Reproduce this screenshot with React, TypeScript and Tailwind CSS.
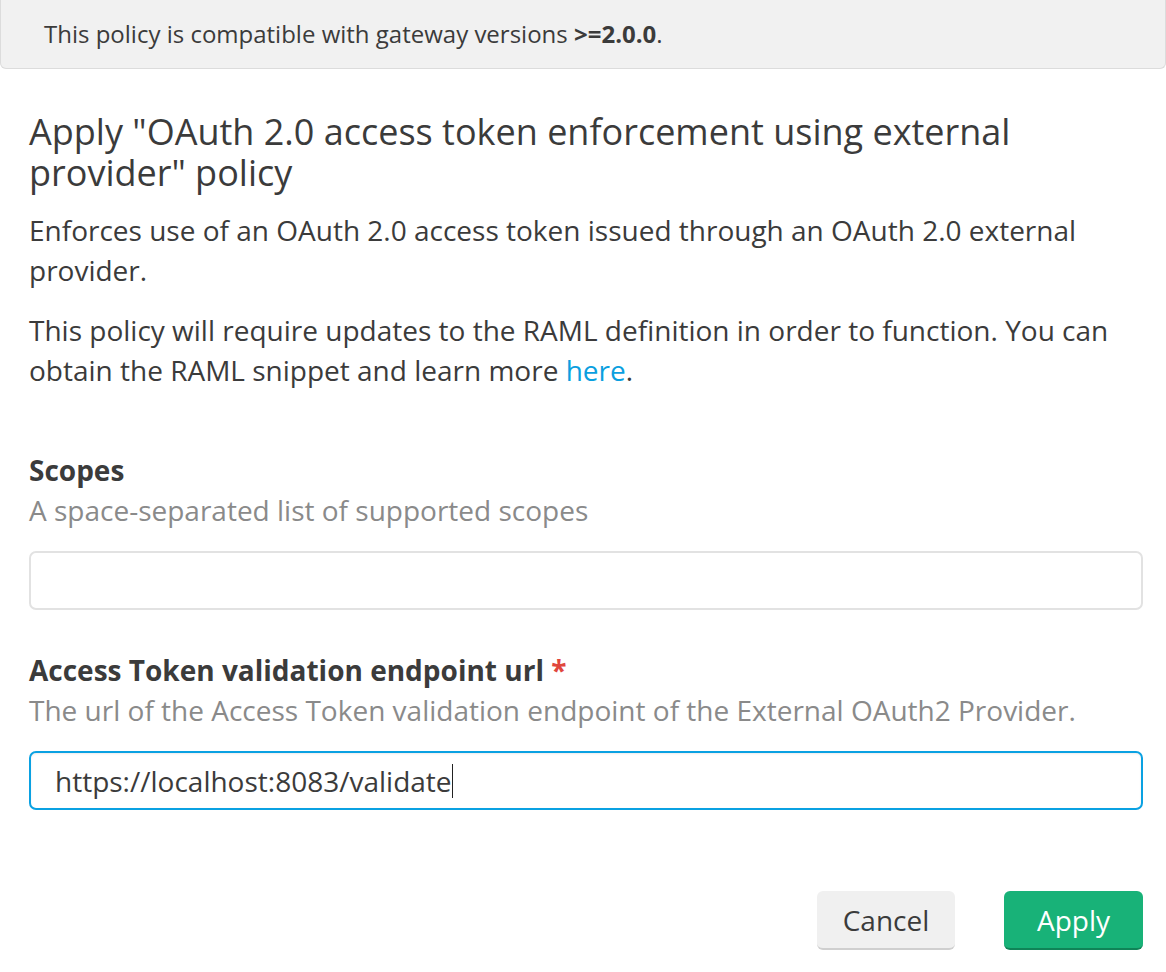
export default function App() {
  return (
    <div className="min-h-screen bg-white text-[#3b3b3b]" style={{ fontFamily: '"Open Sans", "Noto Sans", sans-serif' }}>
      {/* Compatibility banner */}
      <div className="h-[69px] bg-[#f1f1f1] border border-t-0 border-[#dcdcdc] rounded-b-[6px] flex items-center pl-[43px] text-[24px] text-[#3b3b3b]">
        <span>
          This policy is compatible with gateway versions <b className="font-bold">&gt;=2.0.0</b>.
        </span>
      </div>

      <div className="pl-[29px] pr-[23px]">
        <h2 className="mt-[42px] text-[36px] leading-[41px] font-normal text-[#3b3b3b] pr-[100px]">
          Apply "OAuth 2.0 access token enforcement using external provider" policy
        </h2>
        <p className="mt-[17px] text-[28px] leading-[40px]">
          Enforces use of an OAuth 2.0 access token issued through an OAuth 2.0 external provider.
        </p>
        <p className="mt-[20px] text-[28px] leading-[40px]">
          This policy will require updates to the RAML definition in order to function. You can obtain the RAML snippet and
          learn more <span className="text-[#0a9fdf]">here</span>.
        </p>

        {/* Scopes */}
        <div className="mt-[60px]">
          <label className="block text-[28px] leading-[40px] font-bold text-[#3b3b3b]">Scopes</label>
          <div className="text-[28px] leading-[40px] text-[#8a8a8a]">A space-separated list of supported scopes</div>
          <div className="mt-[21px] h-[59px] rounded-[7px] border-2 border-[#e2e2e2] bg-white" />
        </div>

        {/* Endpoint url */}
        <div className="mt-[40px]">
          <label className="block text-[28px] leading-[40px] font-bold text-[#3b3b3b]">
            Access Token validation endpoint url <span className="text-[#e0473d]">*</span>
          </label>
          <div className="text-[28px] leading-[40px] text-[#8a8a8a]">
            The url of the Access Token validation endpoint of the External OAuth2 Provider.
          </div>
          <div className="mt-[21px] h-[59px] rounded-[7px] border-2 border-[#0aa1e2] bg-white flex items-center pl-[24px] text-[28px] text-[#3b3b3b] shadow-[inset_0_1px_2px_rgba(0,0,0,0.08)]">
            <span>https://localhost:8083/validate</span>
            <span className="inline-block w-[1.5px] h-[34px] bg-[#222]" />
          </div>
        </div>

        {/* Actions */}
        <div className="mt-[81px] flex justify-end gap-[49px]">
          <button className="w-[138px] h-[59px] rounded-[6px] bg-[#f0f0f0] border-b-2 border-[#cfcfcf] text-[28px] text-[#3b3b3b]">
            Cancel
          </button>
          <button className="w-[139px] h-[59px] rounded-[6px] bg-[#18b278] border-b-2 border-[#0f8457] text-[28px] text-white">
            Apply
          </button>
        </div>
      </div>
    </div>
  );
}
